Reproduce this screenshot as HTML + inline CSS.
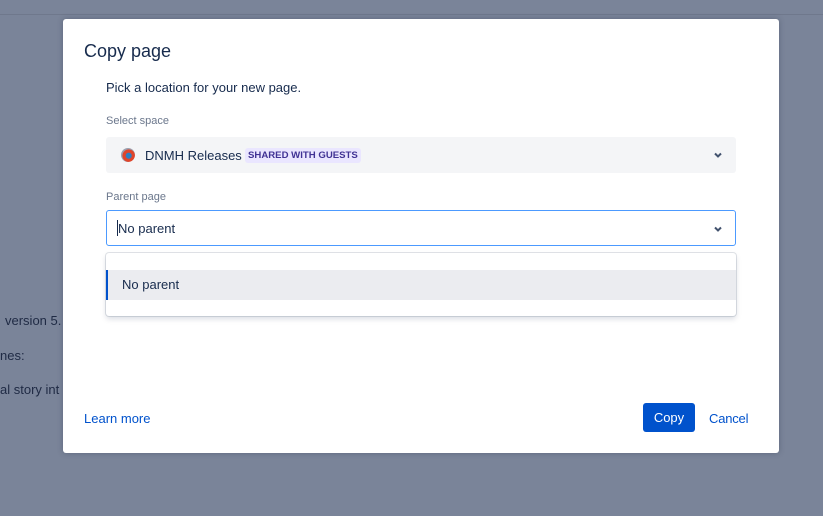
<!DOCTYPE html>
<html><head><meta charset="utf-8"><style>
*{box-sizing:border-box;margin:0;padding:0}
body{width:823px;height:516px;overflow:hidden;background:#7a8499;font-family:"Liberation Sans",sans-serif;position:relative}
.top{position:absolute;left:0;top:0;width:823px;height:15px;background:#7a8499;border-bottom:1px solid #6f788c}
.bgtxt{position:absolute;color:#1f2a44;font-size:13px}
.modal{position:absolute;left:63px;top:19px;width:716px;height:434px;background:#fff;border-radius:3px;box-shadow:0 0 6px rgba(40,50,70,.35)}
.abs{position:absolute}
h1{position:absolute;left:21px;top:22px;font-size:18px;font-weight:normal;color:#172b4d}
.lbl{font-size:11px;color:#6b778c}
.chev{position:absolute;width:10px;height:10px}
.btn{position:absolute;left:580px;top:384px;width:52px;height:29px;background:#0052cc;color:#fff;border-radius:3px;font-size:13px;text-align:center;line-height:29px}
.link{color:#0052cc;font-size:13px}
</style></head><body>
<div class="top"></div>
<div class="bgtxt" style="left:5px;top:313px">version 5.</div>
<div class="bgtxt" style="left:0;top:348px">nes:</div>
<div class="bgtxt" style="left:0;top:382px">al story int</div>
<div class="modal">
<h1>Copy page</h1>
<div class="abs" style="left:43px;top:61px;font-size:13px;color:#172b4d">Pick a location for your new page.</div>
<div class="abs lbl" style="left:43px;top:96px">Select space</div>
<div class="abs" style="left:43px;top:118px;width:630px;height:36px;background:#f4f5f7;border-radius:3px">
 <div class="abs" style="left:15px;top:11px;width:14px;height:14px;border-radius:50%;background:radial-gradient(circle at 55% 55%,#2d7fc2 0 25%,#e0452b 30% 55%,#9aa0b0 60%)"></div>
 <div class="abs" style="left:39px;top:11px;font-size:13px;color:#172b4d">DNMH Releases</div>
 <div class="abs" style="left:139px;top:11px;height:15px;padding:0 3px;background:#eae6ff;color:#403294;font-size:9.6px;font-weight:bold;line-height:15px;border-radius:3px">SHARED WITH GUESTS</div>
 <svg class="chev" style="left:607px;top:13px" viewBox="0 0 10 10"><path d="M2 3.5L5 6.5 8 3.5" fill="none" stroke="#42526e" stroke-width="2"/></svg>
</div>
<div class="abs lbl" style="left:43px;top:172px">Parent page</div>
<div class="abs" style="left:43px;top:191px;width:630px;height:36px;border:1px solid #4c9aff;border-radius:3px">
 <div class="abs" style="left:10px;top:9px;width:1px;height:16px;background:#172b4d"></div>
 <div class="abs" style="left:11px;top:10px;font-size:13px;color:#172b4d">No parent</div>
 <svg class="chev" style="left:606px;top:13px" viewBox="0 0 10 10"><path d="M2 3.5L5 6.5 8 3.5" fill="none" stroke="#42526e" stroke-width="2"/></svg>
</div>
<div class="abs" style="left:43px;top:234px;width:630px;height:63px;border-radius:3px;box-shadow:0 0 0 1px rgba(9,30,66,.12),0 3px 6px rgba(9,30,66,.15);background:#fff">
 <div class="abs" style="left:0;top:17px;width:630px;height:30px;background:#ebecf0;border-left:2px solid #0052cc"></div>
 <div class="abs" style="left:16px;top:24px;font-size:13px;color:#172b4d">No parent</div>
</div>
<div class="abs link" style="left:21px;top:392px">Learn more</div>
<div class="btn">Copy</div>
<div class="abs link" style="left:646px;top:392px;letter-spacing:-0.2px">Cancel</div>
</div>
</body></html>
